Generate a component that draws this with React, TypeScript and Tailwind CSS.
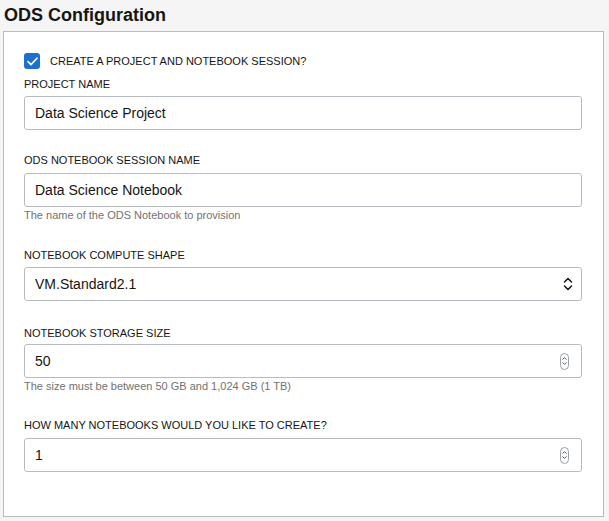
import React from 'react';

const Label: React.FC<{ text: string; className?: string }> = ({ text, className }) => (
  <div className={`text-[11px] leading-[14px] text-[#161513] uppercase ${className ?? ''}`}>{text}</div>
);

const Help: React.FC<{ text: string }> = ({ text }) => (
  <div className="mt-[2px] text-[11px] leading-[13px] text-[#727272]">{text}</div>
);

const SelectChevrons = () => (
  <svg width="10" height="14" viewBox="0 0 10 14" fill="none" stroke="#1a1a1a" strokeWidth="1.6" strokeLinecap="round" strokeLinejoin="round">
    <path d="M1.5 5 L5 1.5 L8.5 5" />
    <path d="M1.5 9 L5 12.5 L8.5 9" />
  </svg>
);

const Spinner = () => (
  <div className="w-[9px] h-[17px] rounded-[5px] border border-[#9aa0a6] flex flex-col items-center justify-center gap-[2px] bg-white">
    <svg width="5" height="3" viewBox="0 0 5 3" fill="none" stroke="#444" strokeWidth="0.9">
      <path d="M0.5 2.6 L2.5 0.6 L4.5 2.6" />
    </svg>
    <svg width="5" height="3" viewBox="0 0 5 3" fill="none" stroke="#444" strokeWidth="0.9">
      <path d="M0.5 0.4 L2.5 2.4 L4.5 0.4" />
    </svg>
  </div>
);

const Field: React.FC<{ value: string; right?: React.ReactNode; className?: string }> = ({ value, right, className }) => (
  <div className={`h-[34px] w-full rounded-[3px] border border-[#b7bcc2] bg-white flex items-center pl-[10px] ${className ?? ''}`}>
    <span className="flex-1 text-[14px] text-[#161513]">{value}</span>
    {right}
  </div>
);

export default function App() {
  return (
    <div className="w-[609px] h-[521px] bg-[#f5f5f5] overflow-hidden" style={{ fontFamily: '"Liberation Sans", Arial, sans-serif' }}>
      <h1 className="pl-[4px] pt-[3px] h-[31px] text-[18px] leading-[24px] font-bold text-[#161513]">ODS Configuration</h1>
      <div className="ml-[3px] w-[601px] h-[486px] border border-[#b7bcc2] bg-white pl-[20px] pr-[21px] pt-[21px]">
        <div className="flex items-center h-[16px]">
          <div className="w-[16px] h-[16px] rounded-[3px] bg-[#1f6fd1] flex items-center justify-center">
            <svg width="11" height="9" viewBox="0 0 11 9" fill="none" stroke="white" strokeWidth="1.6" strokeLinecap="round" strokeLinejoin="round">
              <path d="M1 4.6 L4 7.6 L10 1.2" />
            </svg>
          </div>
          <span className="ml-[10px] text-[11px] leading-[14px] text-[#161513]">CREATE A PROJECT AND NOTEBOOK SESSION?</span>
        </div>

        <Label text="Project Name" className="mt-[8px]" />
        <Field value="Data Science Project" className="mt-[5px]" />

        <Label text="ODS Notebook Session Name" className="mt-[23px]" />
        <Field value="Data Science Notebook" className="mt-[6px]" />
        <Help text="The name of the ODS Notebook to provision" />

        <Label text="Notebook Compute Shape" className="mt-[26px]" />
        <Field value="VM.Standard2.1" className="mt-[5px] pr-[8px]" right={<SelectChevrons />} />

        <Label text="Notebook Storage Size" className="mt-[25px]" />
        <Field value="50" className="mt-[4px] pr-[12px]" right={<Spinner />} />
        <Help text="The size must be between 50 GB and 1,024 GB (1 TB)" />

        <Label text="How many notebooks would you like to create?" className="mt-[25px]" />
        <Field value="1" className="mt-[6px] pr-[12px]" right={<Spinner />} />
      </div>
    </div>
  );
}
